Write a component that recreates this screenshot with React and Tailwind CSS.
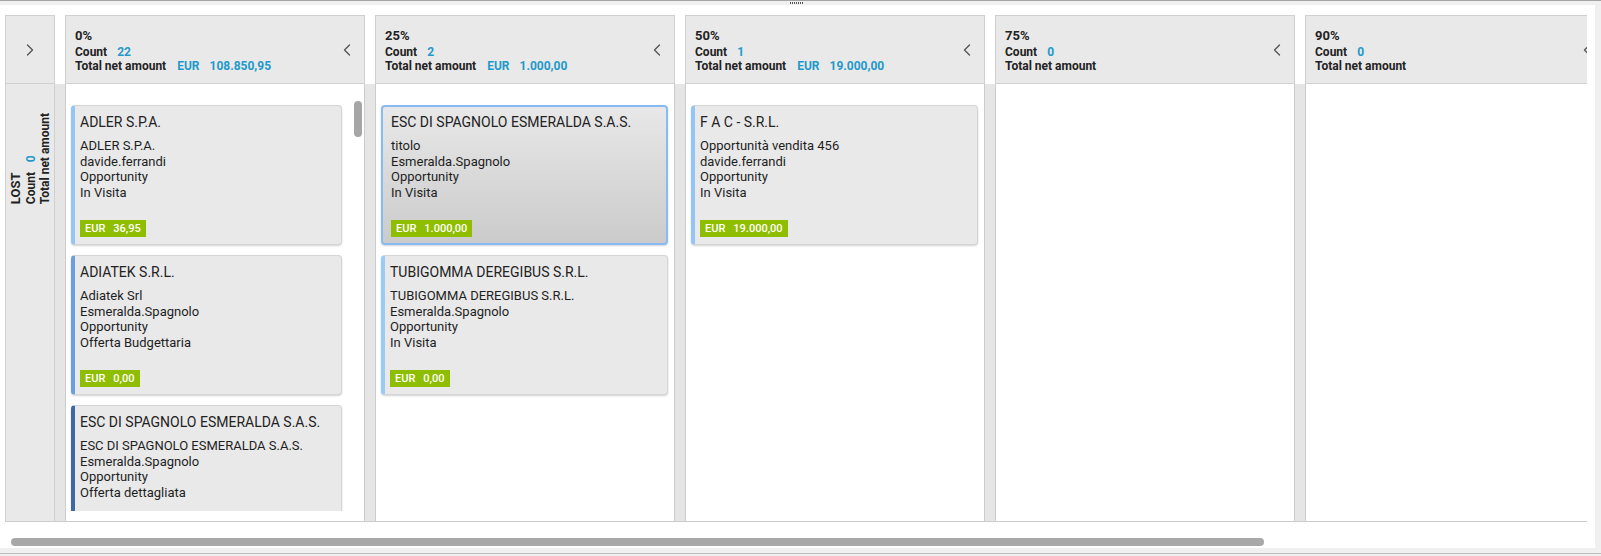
import React from "react";

const BLUE = "text-[#2399c9]";

function ChevronLeft() {
  return (
    <svg width="20" height="20" viewBox="0 0 24 24" fill="none" stroke="#555" strokeWidth="1.6" strokeLinecap="round" strokeLinejoin="round">
      <path d="m15 18-6-6 6-6" />
    </svg>
  );
}
function ChevronRight() {
  return (
    <svg width="20" height="20" viewBox="0 0 24 24" fill="none" stroke="#555" strokeWidth="1.6" strokeLinecap="round" strokeLinejoin="round">
      <path d="m9 18 6-6-6-6" />
    </svg>
  );
}

const columns = [
  {
    title: "0%",
    count: "22",
    amount: "108.850,95",
    scroll: true,
    cards: [
      { title: "ADLER S.P.A.", lines: ["ADLER S.P.A.", "davide.ferrandi", "Opportunity", "In Visita"], value: "36,95", bar: "border-l-[#94c5f7]" },
      { title: "ADIATEK S.R.L.", lines: ["Adiatek Srl", "Esmeralda.Spagnolo", "Opportunity", "Offerta Budgettaria"], value: "0,00", bar: "border-l-[#6c9fdf]" },
      { title: "ESC DI SPAGNOLO ESMERALDA S.A.S.", lines: ["ESC DI SPAGNOLO ESMERALDA S.A.S.", "Esmeralda.Spagnolo", "Opportunity", "Offerta dettagliata"], value: "0,00", bar: "border-l-[#3e68a4]" },
      { title: "ADLER S.P.A.", lines: ["ADLER S.P.A.", "davide.ferrandi", "Opportunity", "In Visita"], value: "0,00", bar: "border-l-[#94c5f7]" },
    ],
  },
  {
    title: "25%",
    count: "2",
    amount: "1.000,00",
    cards: [
      { title: "ESC DI SPAGNOLO ESMERALDA S.A.S.", lines: ["titolo", "Esmeralda.Spagnolo", "Opportunity", "In Visita"], value: "1.000,00", selected: true },
      { title: "TUBIGOMMA DEREGIBUS S.R.L.", lines: ["TUBIGOMMA DEREGIBUS S.R.L.", "Esmeralda.Spagnolo", "Opportunity", "In Visita"], value: "0,00", bar: "border-l-[#9ccaf6]" },
    ],
  },
  {
    title: "50%",
    count: "1",
    amount: "19.000,00",
    cards: [
      { title: "F A C - S.R.L.", lines: ["Opportunità vendita 456", "davide.ferrandi", "Opportunity", "In Visita"], value: "19.000,00", bar: "border-l-[#94c5f7]" },
    ],
  },
  { title: "75%", count: "0", cards: [] },
  { title: "90%", count: "0", cards: [] },
];

function Card({ c, width }) {
  const base = c.selected
    ? "border-2 border-[#86bbf3] bg-linear-to-b from-[#e8e8e8] to-[#cbcbcb] pl-[8px] pt-[5px] pb-[6px]"
    : `border border-[#d5d5d5] border-l-4 ${c.bar} bg-[#e9e9e9] pl-[5px] pt-[6px] pb-[7px]`;
  return (
    <div className={`${width} h-[140px] shrink-0 rounded-[4px] shadow-[0_1px_2px_rgba(0,0,0,0.18)] ${base} flex flex-col`}>
      <div className="text-[14px] leading-[20px] text-[#222] whitespace-nowrap">{c.title}</div>
      <div className="mt-[6px] text-[13px] leading-[15.5px] text-[#1e1e1e]">
        {c.lines.map((l, i) => (
          <div key={i} className="whitespace-nowrap">{l}</div>
        ))}
      </div>
      <div className="mt-[20px] flex">
        <div className="h-[17px] bg-[#8fbe00] text-white text-[11px] font-medium leading-[17px] px-[5px] flex gap-[8px]">
          <span>EUR</span>
          <span>{c.value}</span>
        </div>
      </div>
    </div>
  );
}

export default function App() {
  return (
    <div className="w-[1601px] h-[556px] bg-[#f0f0f0] overflow-hidden font-[Roboto,sans-serif] text-[#222]">
      <div className="h-px bg-[#a3a3a3]" />
      <div className="h-[4px] flex pl-[790px] items-center">
        <div className="flex gap-[1px]">
          {[0, 1, 2, 3, 4, 5, 6].map((i) => (
            <span key={i} className="w-px h-[2px] bg-[#555]" />
          ))}
        </div>
      </div>
      <div className="w-[1595px] h-[543px] bg-white pt-[10px] pl-[5px]">
        <div className="w-[1582px] overflow-hidden">
          <div className="w-max flex flex-col">
            {/* header row */}
            <div className="flex gap-[10px]">
              <div className="w-[50px] h-[69px] shrink-0 bg-[#e9e9e9] border border-[#d0d0d0] flex items-center justify-center">
                <ChevronRight />
              </div>
              {columns.map((col) => (
                <div key={col.title} className="w-[300px] h-[69px] shrink-0 bg-[#e9e9e9] border border-[#d0d0d0] flex items-center justify-between pl-[9px] pr-[7px]">
                  <div className="flex flex-col font-bold">
                    <div className="text-[13px] leading-[18px]">{col.title}</div>
                    <div className="text-[12px] leading-[14px]">
                      Count<span className={`ml-[10px] ${BLUE}`}>{col.count}</span>
                    </div>
                    <div className="text-[12px] leading-[14px] whitespace-nowrap">
                      Total net amount
                      {col.amount && (
                        <>
                          <span className={`ml-[11px] ${BLUE}`}>EUR</span>
                          <span className={`ml-[10px] ${BLUE}`}>{col.amount}</span>
                        </>
                      )}
                    </div>
                  </div>
                  <ChevronLeft />
                </div>
              ))}
            </div>
            {/* body row */}
            <div className="flex gap-[10px] bg-[#e5e5e5] border-b border-[#cccccc]">
              <div className="w-[50px] h-[437px] shrink-0 bg-[#e9e9e9] border-x border-[#d0d0d0] flex justify-center pt-[29px]">
                <div className="[writing-mode:vertical-rl] rotate-180 font-bold h-max">
                  <div className="text-[13px] leading-[16px]">LOST</div>
                  <div className="text-[12px] leading-[14px]">
                    Count<span className={`ms-[10px] ${BLUE}`}>0</span>
                  </div>
                  <div className="text-[12px] leading-[14px] whitespace-nowrap">Total net amount</div>
                </div>
              </div>
              {columns.map((col) => (
                <div key={col.title} className="w-[300px] h-[437px] shrink-0 bg-white border-x border-[#cccccc] flex flex-col">
                  <div className="h-[427px] overflow-hidden flex">
                    <div className={`flex-1 flex flex-col gap-[10px] pt-[21px] pl-[5px] ${col.scroll ? "pr-[12px]" : "pr-[6px]"}`}>
                      {col.cards.map((c, i) => (
                        <Card key={i} c={c} width={col.scroll ? "w-[271px]" : "w-[287px]"} />
                      ))}
                    </div>
                    {col.scroll && (
                      <div className="w-[8px] mr-[2px] pt-[17px] shrink-0">
                        <div className="h-[36px] rounded-[4px] bg-[#a6a6a6]" />
                      </div>
                    )}
                  </div>
                </div>
              ))}
            </div>
          </div>
        </div>
        <div className="mt-[16px] ml-[6px] w-[1253px] h-[8px] rounded-full bg-[#a8a8a8]" />
      </div>
      <div className="h-[5px]" />
      <div className="h-px bg-[#bdbdbd]" />
    </div>
  );
}
